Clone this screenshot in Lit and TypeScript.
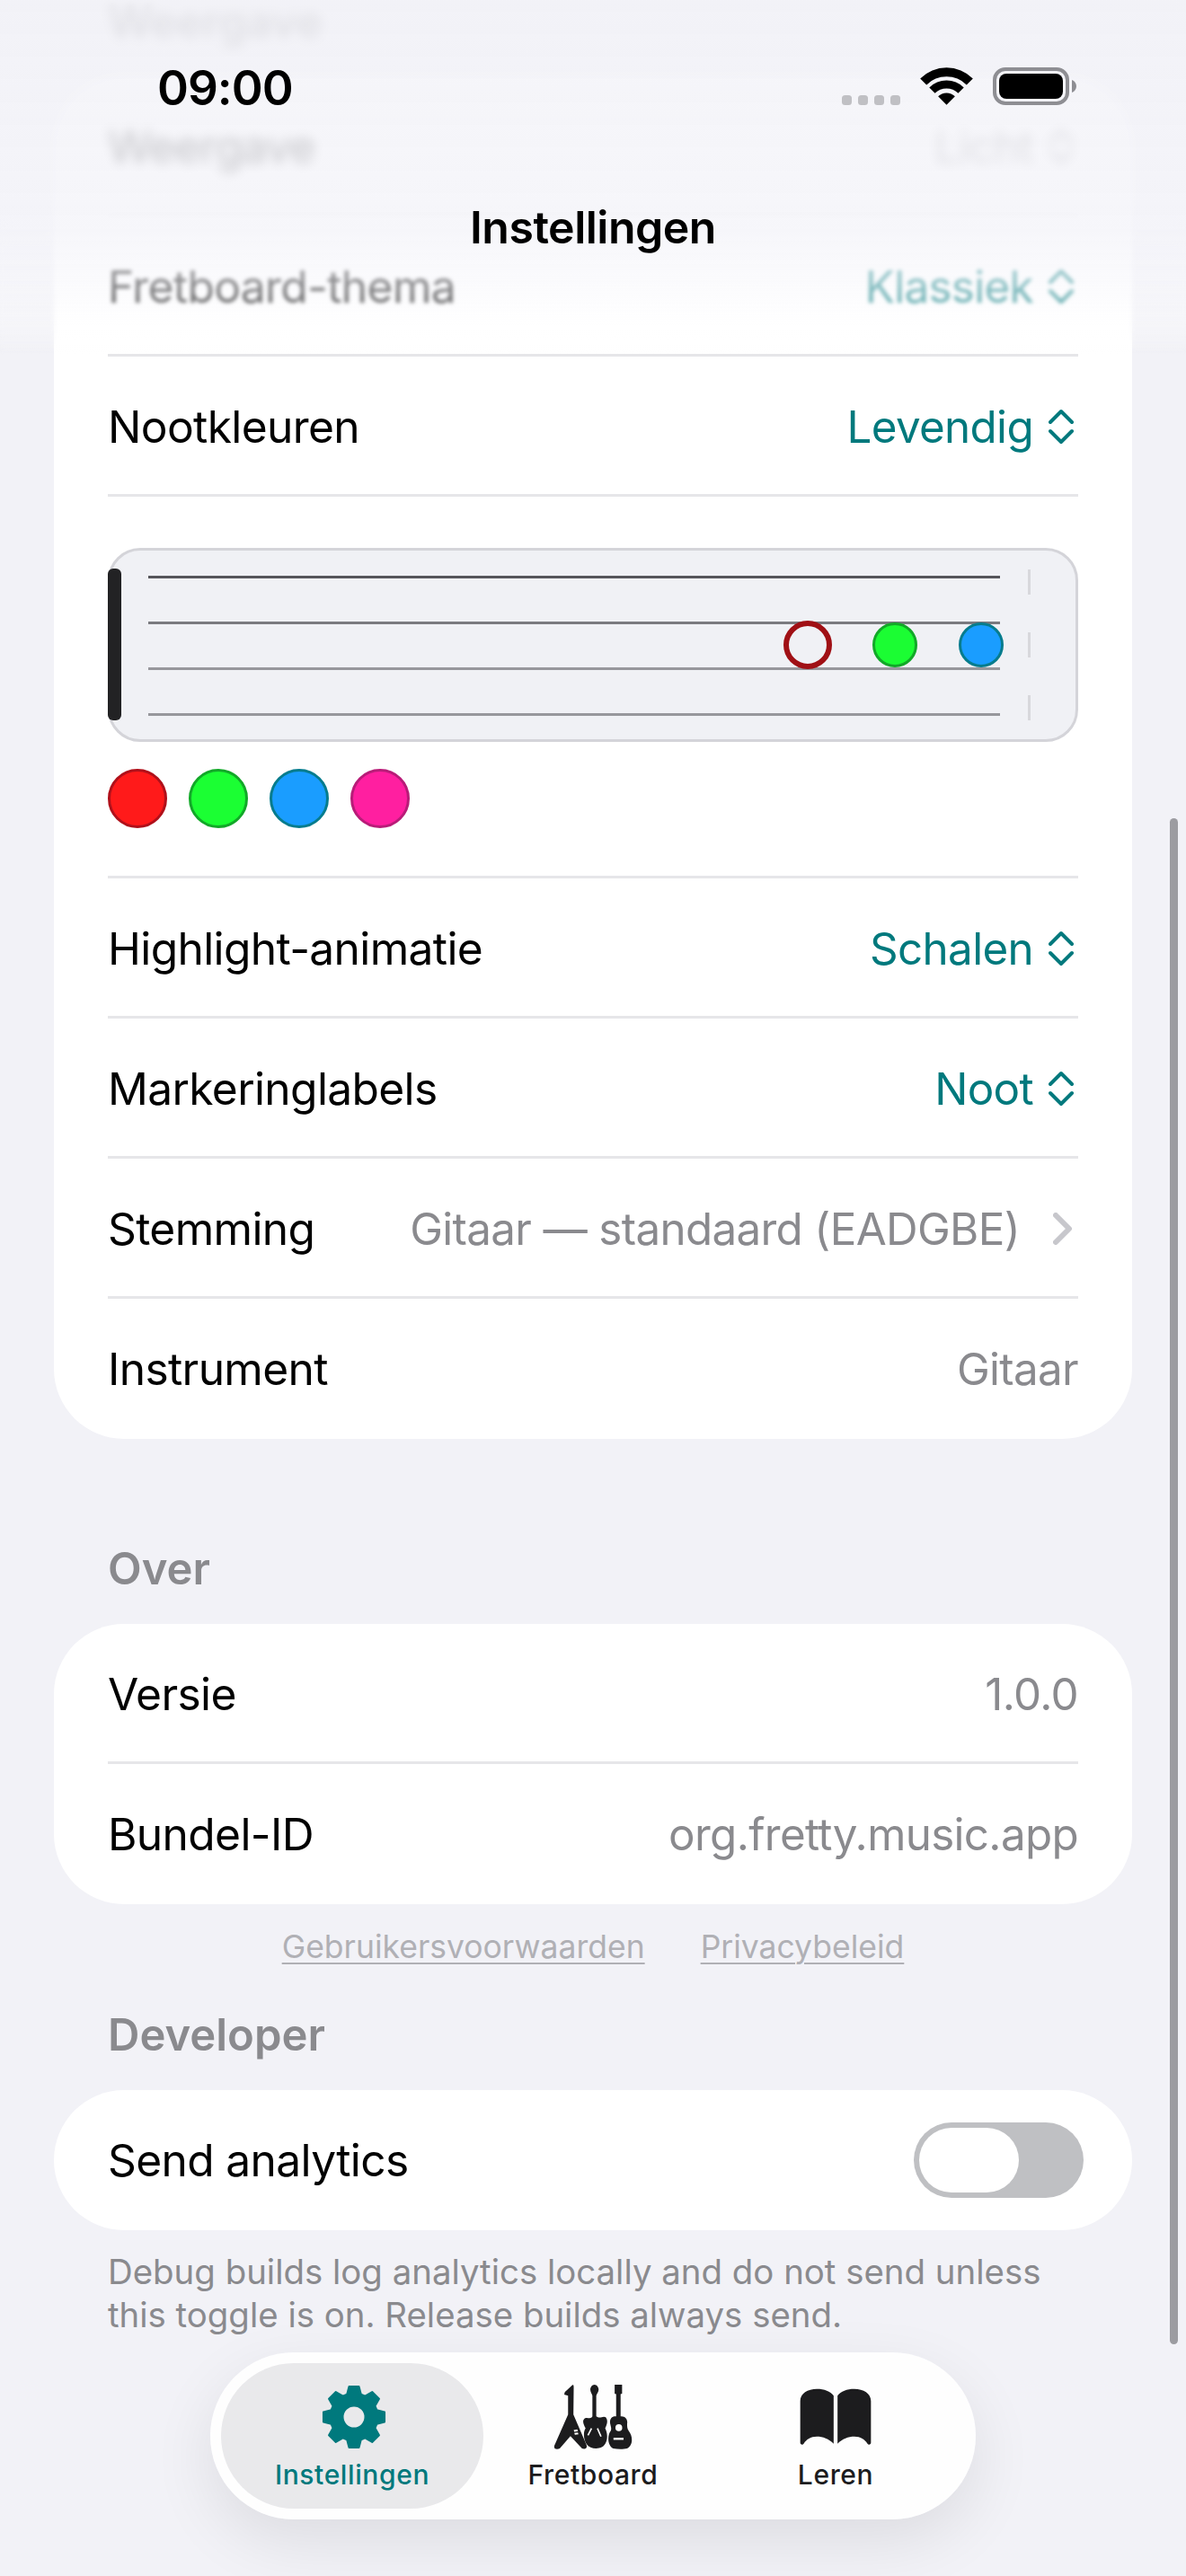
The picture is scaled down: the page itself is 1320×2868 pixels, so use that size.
import { LitElement, html, css } from "lit";
import { customElement } from "lit/decorators.js";

const gearPath = (() => {
  const cx = 36, cy = 36, R = 34.5, r = 26.5, teeth = 8;
  let d = "";
  for (let i = 0; i < teeth; i++) {
    const a = (i * 2 * Math.PI) / teeth - Math.PI / 2;
    const pts: [number, number][] = [
      [r, a - 0.3],
      [R, a - 0.16],
      [R, a + 0.16],
      [r, a + 0.3],
    ];
    for (const [rad, ang] of pts) {
      const x = (cx + rad * Math.cos(ang)).toFixed(2);
      const y = (cy + rad * Math.sin(ang)).toFixed(2);
      d += `${d ? "L" : "M"}${x} ${y} `;
    }
  }
  return d + "Z M48.5 36 A12.5 12.5 0 1 0 23.5 36 A12.5 12.5 0 1 0 48.5 36 Z";
})();

const stepper = html`<svg class="stepper" viewBox="0 0 28 40"><path d="M2 15 L14 3 L26 15 M2 25 L14 37 L26 25" /></svg>`;
const chevron = html`<svg class="chev" viewBox="0 0 22 36"><path d="M3 3 L18 18 L3 33" /></svg>`;

const topRows = [
  { l: "Weergave", v: "Licht", k: "light" },
  { l: "Fretboard-thema", v: "Klassiek", k: "pick" },
  { l: "Nootkleuren", v: "Levendig", k: "pick" },
];
const lowRows = [
  { l: "Highlight-animatie", v: "Schalen", k: "pick" },
  { l: "Markeringlabels", v: "Noot", k: "pick" },
  { l: "Stemming", v: "Gitaar — standaard (EADGBE)", k: "nav" },
  { l: "Instrument", v: "Gitaar", k: "plain" },
];
const swatches = ["red", "green", "blue", "pink"];

@customElement("app-root")
export class AppRoot extends LitElement {
  static styles = css`
    :host {
      display: block;
      width: 1320px;
      height: 2868px;
      font-family: Inter, "Liberation Sans", sans-serif;
      color: #000;
    }
    .screen {
      position: relative;
      width: 1320px;
      height: 2868px;
      overflow: hidden;
      background: #f2f2f7;
    }
    .content {
      display: flex;
      flex-direction: column;
      padding: 0 60px;
    }
    .heading {
      height: 60px;
      padding: 0 60px;
      font-size: 49px;
      line-height: 60px;
      font-weight: 600;
      color: #8a8a8e;
    }
    .first {
      height: 85px;
      line-height: 50px;
    }
    .over {
      margin-top: 115px;
      margin-bottom: 31px;
    }
    .dev {
      margin-top: 45px;
      margin-bottom: 31px;
    }
    .card {
      background: #fff;
      border-radius: 78px;
      padding: 0 60px;
    }
    .row {
      box-sizing: border-box;
      height: 156px;
      display: flex;
      align-items: center;
      justify-content: space-between;
      border-bottom: 3px solid #e6e6e9;
      font-size: 49.7px;
      letter-spacing: -0.65px;
      padding-top: 3px;
    }
    .row.last {
      border-bottom: 0;
      padding-top: 0;
    }
    .val {
      display: flex;
      align-items: center;
      font-size: 49.3px;
      color: #8a8a8e;
    }
    .val.pick {
      color: #00797d;
    }
    .stepper {
      width: 28px;
      height: 40px;
      margin-left: 17px;
      margin-right: 5px;
      fill: none;
      stroke: currentColor;
      stroke-width: 4px;
      stroke-linecap: round;
      stroke-linejoin: round;
    }
    .chev {
      width: 22px;
      height: 36px;
      margin-left: 37px;
      margin-right: 6px;
      fill: none;
      stroke: #c7c7cc;
      stroke-width: 6px;
      stroke-linecap: round;
      stroke-linejoin: round;
    }
    .previewRow {
      box-sizing: border-box;
      height: 425px;
      padding-top: 57px;
      border-bottom: 3px solid #e6e6e9;
    }
    .board {
      position: relative;
      box-sizing: border-box;
      height: 216px;
      background: #f0f1f5;
      border: 3px solid #d4d4d9;
      border-radius: 36px;
    }
    .nut {
      position: absolute;
      left: -3px;
      top: 20px;
      width: 15px;
      height: 169px;
      border-radius: 6px;
      background: #222224;
    }
    .string {
      position: absolute;
      left: 42px;
      width: 948px;
      height: 3px;
    }
    .s1 { top: 28px; background: #55555a; }
    .s2 { top: 79px; background: #7a7a7f; }
    .s3 { top: 130px; background: #97979c; }
    .s4 { top: 181px; background: #97979c; }
    .fret {
      position: absolute;
      left: 1021px;
      width: 3px;
      height: 28px;
      background: #d8d8dc;
    }
    .f1 { top: 21px; }
    .f2 { top: 91px; }
    .f3 { top: 161px; }
    .note {
      position: absolute;
      box-sizing: border-box;
      border-radius: 50%;
    }
    .ring {
      left: 749px;
      top: 78px;
      width: 54px;
      height: 54px;
      border: 6px solid #a01015;
    }
    .ngreen {
      left: 848px;
      top: 80px;
      width: 50px;
      height: 50px;
      background: #1bfd33;
      border: 3px solid #12a828;
    }
    .nblue {
      left: 944px;
      top: 80px;
      width: 50px;
      height: 50px;
      background: #1a9dff;
      border: 3px solid #067c8d;
    }
    .swatches {
      display: flex;
      gap: 24px;
      margin-top: 30px;
    }
    .sw {
      box-sizing: border-box;
      width: 66px;
      height: 66px;
      border-radius: 50%;
      border: 3px solid;
    }
    .red { background: #ff1a1a; border-color: #b0101a; }
    .green { background: #1bff33; border-color: #12a828; }
    .blue { background: #1a9dff; border-color: #067c8d; }
    .pink { background: #ff1fa0; border-color: #b81c78; }
    .links {
      display: flex;
      justify-content: center;
      gap: 62px;
      margin-top: 25px;
      height: 46px;
      font-size: 35.5px;
      line-height: 46px;
      color: #b0b0b5;
      text-decoration: underline;
      text-decoration-thickness: 2px;
      text-underline-offset: 5px;
    }
    .toggleRow {
      box-sizing: border-box;
      height: 156px;
      display: flex;
      align-items: center;
      justify-content: space-between;
      font-size: 49.7px;
      letter-spacing: -0.65px;
    }
    .toggle {
      box-sizing: border-box;
      width: 189px;
      height: 84px;
      margin-right: -6px;
      padding: 6px;
      border-radius: 42px;
      background: #bfc0c3;
    }
    .thumb {
      width: 111px;
      height: 72px;
      border-radius: 36px;
      background: #fff;
    }
    .foot {
      padding: 22px 60px 0;
      font-size: 38.4px;
      line-height: 48px;
      color: #8a8a8e;
    }
    .blurA,
    .blurB,
    .tint {
      position: absolute;
      left: 0;
      right: 0;
      top: 0;
    }
    .blurA {
      height: 395px;
      backdrop-filter: blur(2.2px);
      -webkit-mask-image: linear-gradient(#000 88%, transparent 100%);
      mask-image: linear-gradient(#000 88%, transparent 100%);
    }
    .blurB {
      height: 280px;
      backdrop-filter: blur(6px);
      -webkit-mask-image: linear-gradient(#000 76%, transparent 100%);
      mask-image: linear-gradient(#000 76%, transparent 100%);
    }
    .tint {
      height: 395px;
      background: linear-gradient(
        rgba(242, 242, 247, 0.84) 0%,
        rgba(244, 244, 249, 0.8) 64%,
        rgba(247, 247, 251, 0.6) 78%,
        rgba(255, 255, 255, 0.3) 92%,
        rgba(255, 255, 255, 0) 100%
      );
    }
    .status {
      position: absolute;
      inset: 0 0 auto 0;
      height: 120px;
    }
    .time {
      position: absolute;
      left: 175px;
      top: 66px;
      font-size: 53px;
      line-height: 64px;
      font-weight: 600;
      letter-spacing: -1px;
    }
    .dots {
      position: absolute;
      left: 937px;
      top: 106px;
      display: flex;
      gap: 7px;
    }
    .dots i {
      width: 11px;
      height: 11px;
      border-radius: 3.5px;
      background: #c0c0c4;
    }
    .wifi {
      position: absolute;
      left: 1024px;
      top: 75px;
      width: 59px;
      height: 42px;
    }
    .batt {
      position: absolute;
      left: 1105px;
      top: 75px;
      width: 93px;
      height: 42px;
    }
    .title {
      position: absolute;
      left: 0;
      right: 0;
      top: 220px;
      text-align: center;
      font-size: 50px;
      line-height: 66px;
      font-weight: 600;
      letter-spacing: -0.5px;
    }
    .scrollbar {
      position: absolute;
      left: 1302px;
      top: 911px;
      width: 9px;
      height: 1699px;
      border-radius: 5px;
      background: #9c9ca1;
    }
    .tabbar {
      position: absolute;
      left: 234px;
      top: 2619px;
      box-sizing: border-box;
      width: 852px;
      height: 186px;
      padding: 12px;
      display: flex;
      border-radius: 93px;
      background: rgba(255, 255, 255, 0.88);
      box-shadow: 0 24px 70px rgba(0, 0, 0, 0.09);
    }
    .tab {
      box-sizing: border-box;
      width: 270px;
      height: 162px;
      display: flex;
      flex-direction: column;
      align-items: center;
      padding-top: 24px;
      font-size: 30px;
      line-height: 40px;
      font-weight: 500;
      letter-spacing: 0.6px;
      color: #1c1c1e;
    }
    .tab.sel {
      width: 292px;
      margin-right: -13px;
      border-radius: 81px;
      background: #e9e9eb;
      color: #00797d;
    }
    .ico {
      height: 72px;
      margin-bottom: 8px;
      fill: currentColor;
      display: block;
    }
    .gear { width: 72px; margin-left: 4px; }
    .guitars { width: 88px; }
    .book { width: 80px; }
  `;

  private row(r: { l: string; v: string; k: string }, last = false) {
    return html`<div class="row ${last ? "last" : ""}">
      <span>${r.l}</span>
      <span class="val ${r.k}">
        ${r.v}${r.k === "pick" || r.k === "light" ? stepper : ""}${r.k === "nav" ? chevron : ""}
      </span>
    </div>`;
  }

  private guitars() {
    return html`<svg class="ico guitars" viewBox="105 75 264 218">
      <path d="M168 76 C172 74 172 80 172 84 L171 176 L215 278 C219 290 210 294 200 290 L161 248 L125 290 C115 294 103 292 107 280 L153 176 L153 112 L140 108 L142 100 Z" />
      <path fill="#fff" d="M172 228 L184 226 L186 232 L174 234 Z M174 238 L186 236 L188 242 L176 244 Z" />
      <path d="M242 75 C250 75 256 84 256 92 C256 100 250 106 248 112 L248 182 C262 192 270 178 280 185 C290 198 282 212 278 222 C290 245 285 275 268 285 C250 295 225 290 215 275 C203 255 205 232 212 222 C208 215 200 200 206 192 C215 180 228 195 235 182 L235 112 C233 106 228 100 228 92 C228 84 234 75 242 75 Z" />
      <path fill="none" stroke="#fff" stroke-width="5" d="M232 222 L220 246 M252 222 L264 250" />
      <path d="M310 75 L335 75 L335 105 L330 107 L330 182 C345 180 355 192 352 207 C352 215 352 225 358 232 C372 250 372 280 352 290 C340 293 320 293 305 290 C285 280 285 245 297 230 C300 222 297 217 295 207 C292 192 300 180 315 182 L315 107 L310 105 Z" />
      <circle cx="324" cy="220" r="11.5" fill="#fff" />
      <rect x="306" y="254" width="34" height="7" fill="#fff" />
    </svg>`;
  }

  render() {
    return html`<div class="screen">
      <div class="content">
        <div class="heading first">Weergave</div>
        <div class="card">
          ${topRows.map((r) => this.row(r))}
          <div class="previewRow">
            <div class="board">
              ${[1, 2, 3, 4].map((n) => html`<div class="string s${n}"></div>`)}
              ${[1, 2, 3].map((n) => html`<div class="fret f${n}"></div>`)}
              <div class="nut"></div>
              <div class="note ring"></div>
              <div class="note ngreen"></div>
              <div class="note nblue"></div>
            </div>
            <div class="swatches">${swatches.map((s) => html`<div class="sw ${s}"></div>`)}</div>
          </div>
          ${lowRows.map((r, i) => this.row(r, i === lowRows.length - 1))}
        </div>
        <div class="heading over">Over</div>
        <div class="card">
          ${this.row({ l: "Versie", v: "1.0.0", k: "plain" })}
          ${this.row({ l: "Bundel-ID", v: "org.fretty.music.app", k: "plain" }, true)}
        </div>
        <div class="links"><span>Gebruikersvoorwaarden</span><span>Privacybeleid</span></div>
        <div class="heading dev">Developer</div>
        <div class="card">
          <div class="toggleRow">
            <span>Send analytics</span>
            <div class="toggle"><div class="thumb"></div></div>
          </div>
        </div>
        <div class="foot">Debug builds log analytics locally and do not send unless<br />this toggle is on. Release builds always send.</div>
      </div>

      <div class="blurA"></div>
      <div class="blurB"></div>
      <div class="tint"></div>

      <div class="status">
        <div class="time">09:00</div>
        <div class="dots"><i></i><i></i><i></i><i></i></div>
        <svg class="wifi" viewBox="-3 0 178 125">
          <path d="M-2.4 36.6 A125 125 0 0 1 174.4 36.6 L153.2 57.8 A95 95 0 0 0 18.8 57.8 Z M28 67 A82 82 0 0 1 144 67 L124.9 86.1 A55 55 0 0 0 47.1 86.1 Z M57.7 96.7 A40 40 0 0 1 114.3 96.7 L86 125 Z" />
        </svg>
        <svg class="batt" viewBox="0 0 93 42">
          <rect x="2" y="2" width="81" height="38" rx="12" fill="none" stroke="#8e8e93" stroke-width="4" />
          <rect x="7" y="7" width="71" height="28" rx="8" fill="#000" />
          <path d="M88 14 C91 15 93 18 93 21 C93 24 91 27 88 28 Z" fill="#8e8e93" />
        </svg>
      </div>
      <div class="title">Instellingen</div>
      <div class="scrollbar"></div>

      <div class="tabbar">
        <div class="tab sel">
          <svg class="ico gear" viewBox="0 0 72 72">
            <path fill-rule="evenodd" stroke="currentColor" stroke-width="2" stroke-linejoin="round" d=${gearPath} />
          </svg>
          <span>Instellingen</span>
        </div>
        <div class="tab">${this.guitars()}<span>Fretboard</span></div>
        <div class="tab">
          <svg class="ico book" viewBox="928 78 239 210">
            <path d="M930 130 C930 105 955 90 985 90 C1010 90 1030 98 1041 112 L1041 272 C1025 255 1005 248 985 248 C965 248 950 258 942 271 C938 277 930 275 930 268 Z" />
            <path d="M1165 130 C1165 105 1140 90 1110 90 C1085 90 1065 98 1054 112 L1054 272 C1070 255 1090 248 1110 248 C1130 248 1145 258 1153 271 C1157 277 1165 275 1165 268 Z" />
          </svg>
          <span>Leren</span>
        </div>
      </div>
    </div>`;
  }
}
